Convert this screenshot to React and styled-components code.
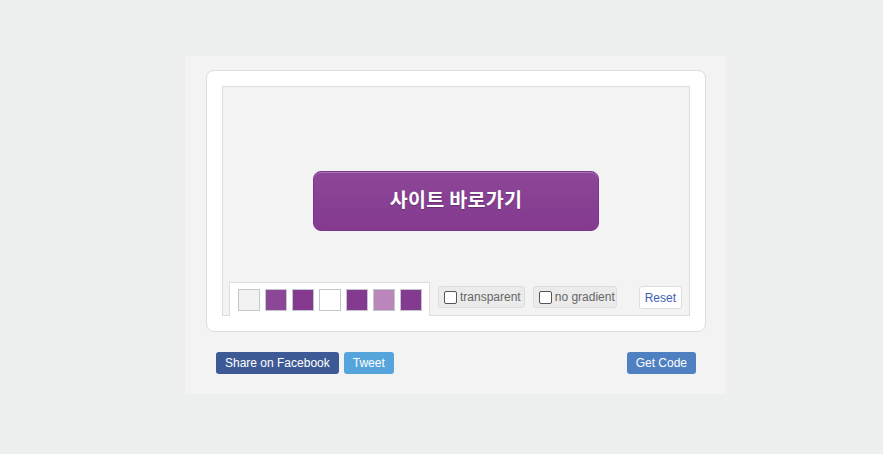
import React from "react";
import styled, { createGlobalStyle } from "styled-components";

const Global = createGlobalStyle`
  html, body { margin: 0; padding: 0; background: #edeeee; }
  body { font-family: "Liberation Sans", Arial, sans-serif; }
`;

const Page = styled.div`
  padding: 56px 0 0 185px;
`;

const Panel = styled.div`
  width: 541px;
  box-sizing: border-box;
  height: 338px;
  background: #f3f3f3;
  padding: 14px 20px 20px 21px;
`;

const Card = styled.div`
  background: #fff;
  border: 1px solid #dddddd;
  border-radius: 8px;
  padding: 15px;
`;

const Preview = styled.div`
  position: relative;
  height: 228px;
  background: #f3f3f3;
  border: 1px solid #dddddd;
  display: flex;
  align-items: center;
  justify-content: center;
`;

const DemoButton = styled.div`
  width: 286px;
  height: 60px;
  box-sizing: border-box;
  padding-bottom: 4px;
  border: 1px solid #7c3689;
  border-radius: 8px;
  background: linear-gradient(#8d4698, #833a8f);
  display: flex;
  align-items: center;
  justify-content: center;
  color: #fff;
  font-family: "Noto Sans CJK KR", "Noto Sans", sans-serif;
  font-weight: 700;
  font-size: 19.5px;
  line-height: 1;
  letter-spacing: 0.3px;
  text-shadow: 0 1px 1px rgba(0, 0, 0, 0.25);
  box-shadow: inset 0 1px 0 rgba(255, 255, 255, 0.25);
`;

const Toolbar = styled.div`
  position: absolute;
  left: 6px;
  right: 7px;
  bottom: -1px;
  display: flex;
  align-items: flex-end;
`;

const PaletteTab = styled.div`
  display: flex;
  gap: 5px;
  background: #fff;
  border: 1px solid #dddddd;
  border-bottom: none;
  padding: 6px 7px 5px 8px;
`;

const Swatch = styled.div`
  width: 22px;
  height: 22px;
  box-sizing: border-box;
  border: 1px solid #c2c6ce;
  background: ${(p) => p.$color};
`;

const Option = styled.label`
  display: flex;
  align-items: center;
  height: 22px;
  box-sizing: border-box;
  margin: 0 0 8px 8px;
  padding: 0 ${(p) => p.$pr}px 0 5px;
  background: #ebebeb;
  border: 1px solid #dddddd;
  border-radius: 3px;
  font-size: 12px;
  color: #666666;
`;

const Box = styled.span`
  width: 13px;
  height: 13px;
  box-sizing: border-box;
  border: 1px solid #555;
  border-radius: 2px;
  background: #fff;
  margin-right: 3px;
`;

const ResetButton = styled.div`
  margin: 0 0 7px auto;
  height: 23px;
  box-sizing: border-box;
  padding: 0 5px;
  display: flex;
  align-items: center;
  background: #fff;
  border: 1px solid #dddddd;
  border-radius: 3px;
  font-size: 12px;
  color: #3f5fb3;
`;

const Footer = styled.div`
  display: flex;
  gap: 5px;
  padding: 20px 10px 0 10px;
`;

const ActionButton = styled.div`
  height: 22px;
  padding: 0 9px;
  display: flex;
  align-items: center;
  border-radius: 3px;
  background: ${(p) => p.$bg};
  color: #fff;
  font-size: 12px;
  margin-left: ${(p) => (p.$push ? "auto" : "0")};
`;

const swatches = ["#f2f2f2", "#8b4696", "#84398f", "#ffffff", "#833a8f", "#bb87ba", "#833a8f"];

export default function App() {
  return (
    <>
      <Global />
      <Page>
        <Panel>
          <Card>
            <Preview>
              <DemoButton>사이트 바로가기</DemoButton>
              <Toolbar>
                <PaletteTab>
                  {swatches.map((c, i) => (
                    <Swatch key={i} $color={c} />
                  ))}
                </PaletteTab>
                <Option $pr={3}>
                  <Box />
                  transparent
                </Option>
                <Option $pr={1}>
                  <Box />
                  no gradient
                </Option>
                <ResetButton>Reset</ResetButton>
              </Toolbar>
            </Preview>
          </Card>
          <Footer>
            <ActionButton $bg="#3d5a96">Share on Facebook</ActionButton>
            <ActionButton $bg="#55a5dc">Tweet</ActionButton>
            <ActionButton $bg="#4f80c2" $push>Get Code</ActionButton>
          </Footer>
        </Panel>
      </Page>
    </>
  );
}
